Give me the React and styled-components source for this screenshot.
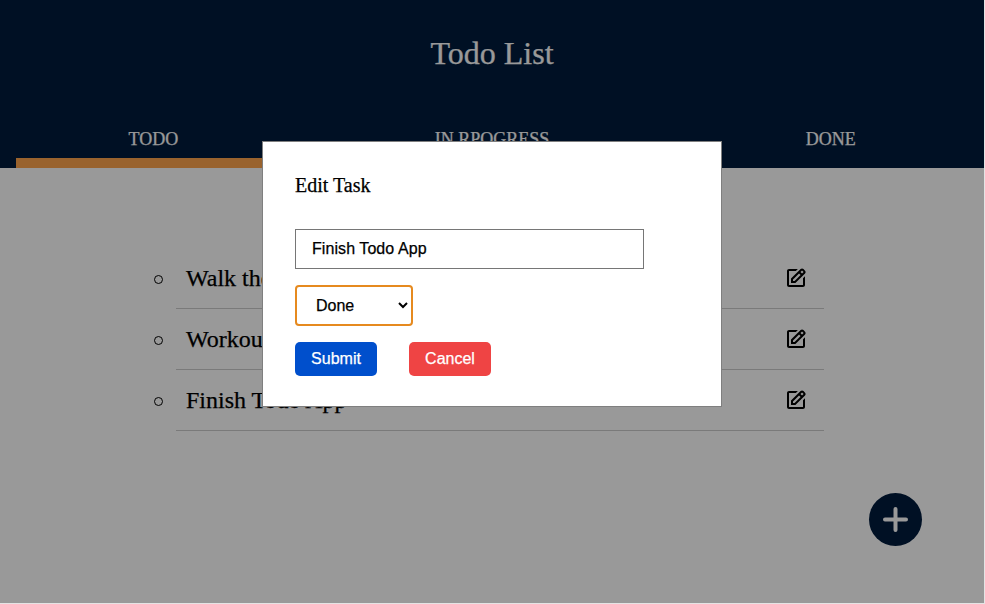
import React from "react";
import styled, { createGlobalStyle } from "styled-components";
import { BiEdit } from "react-icons/bi";

const GlobalStyle = createGlobalStyle`
  * { box-sizing: border-box; }
  html { background: #fff; }
  body { margin: 0; overflow: hidden; font-family: "Liberation Serif", "Times New Roman", serif; color: #000; -webkit-text-stroke: 0.25px currentColor; }
`;

const Page = styled.div`
  width: 985px;
  height: 604px;
  padding: 0 1px 1px 0;
  background: #e4e4e4;
`;

const Screen = styled.div`
  position: relative;
  width: 984px;
  height: 603px;
  background: #fff;
`;

const Header = styled.header`
  height: 168px;
  padding: 0 16px;
  display: flex;
  flex-direction: column;
  justify-content: space-between;
  background: #001b3d;
  color: #fff;
`;

const Title = styled.h1`
  margin: 35px 0 0;
  font-size: 32px;
  font-weight: 400;
  line-height: 37px;
  text-align: center;
`;

const Tabs = styled.nav`
  display: grid;
  grid-template-columns: repeat(3, 1fr);
  gap: 64px;
`;

const Tab = styled.div`
  height: 40px;
  border-bottom: 10px solid ${(p) => (p.$active ? "#ffa54d" : "transparent")};
  font-size: 18px;
  line-height: 22px;
  text-align: center;
`;

const TaskList = styled.ul`
  width: 648px;
  margin: 80px 0 0 176px;
  padding: 0;
  list-style: none;
`;

const TaskRow = styled.li`
  height: 61px;
  margin-left: -22px;
  display: flex;
  align-items: center;
`;

const Bullet = styled.span`
  width: 9px;
  height: 9px;
  margin: 2px 13px 0 0;
  border: 1px solid #000;
  border-radius: 50%;
`;

const TaskBody = styled.div`
  flex: 1;
  height: 61px;
  padding: 0 16px 0 10px;
  display: flex;
  align-items: center;
  justify-content: space-between;
  border-bottom: 1px solid #ccc;
  font-size: 24px;
`;

const AddButton = styled.button`
  position: absolute;
  left: 869px;
  top: 493px;
  width: 53px;
  height: 53px;
  padding: 0;
  border: 0;
  border-radius: 50%;
  display: grid;
  place-items: center;
  background: #001b3d;
`;

const Overlay = styled.div`
  position: absolute;
  inset: 0;
  background: rgba(0, 0, 0, 0.4);
`;

const Modal = styled.section`
  position: absolute;
  left: 262px;
  top: 141px;
  width: 460px;
  height: 266px;
  padding: 32px;
  border: 1px solid #7f7f7f;
  background: #fff;
`;

const ModalTitle = styled.h2`
  margin: 0 0 32px;
  font-size: 20px;
  font-weight: 400;
  line-height: 23px;
`;

const Form = styled.form`
  display: flex;
  flex-direction: column;
  align-items: flex-start;
  gap: 16px;
`;

const TextField = styled.input`
  width: 349px;
  height: 40px;
  padding: 0 16px;
  border: 1px solid #767676;
  border-radius: 0;
  outline: 0;
  background: #fff;
  color: #000;
  font: 16px "Liberation Sans", Arial, sans-serif;
  letter-spacing: 0.07px;
`;

const Select = styled.select`
  width: 118px;
  height: 41px;
  padding: 0 0 0 15px;
  border: 2px solid #e68a1f;
  border-radius: 4px;
  outline: 0;
  background: #fff;
  color: #000;
  font: 16px "Liberation Sans", Arial, sans-serif;
`;

const Actions = styled.div`
  display: flex;
  gap: 32px;
`;

const Button = styled.button`
  width: 82px;
  height: 34px;
  padding: 0;
  border: 0;
  border-radius: 5px;
  background: ${(p) => (p.$danger ? "#ef4444" : "#004fcc")};
  color: #fff;
  font: 16px "Liberation Sans", Arial, sans-serif;
`;

const tasks = ["Walk the dog", "Workout", "Finish Todo App"];

export default function App() {
  return (
    <Page>
      <GlobalStyle />
      <Screen>
        <Header>
          <Title>Todo List</Title>
          <Tabs>
            <Tab $active>TODO</Tab>
            <Tab>IN RPOGRESS</Tab>
            <Tab>DONE</Tab>
          </Tabs>
        </Header>
        <TaskList>
          {tasks.map((task) => (
            <TaskRow key={task}>
              <Bullet />
              <TaskBody>
                <span>{task}</span>
                <BiEdit size={24} />
              </TaskBody>
            </TaskRow>
          ))}
        </TaskList>
        <AddButton aria-label="Add task">
          <svg width="25" height="25" viewBox="0 0 25 25" stroke="#fff" strokeWidth="4" strokeLinecap="round">
            <path d="M2 12.5H23M12.5 2V23" />
          </svg>
        </AddButton>
        <Overlay />
        <Modal>
          <ModalTitle>Edit Task</ModalTitle>
          <Form>
            <TextField defaultValue="Finish Todo App" />
            <Select defaultValue="Done">
              <option>Todo</option>
              <option>In Progress</option>
              <option>Done</option>
            </Select>
            <Actions>
              <Button type="button">Submit</Button>
              <Button type="button" $danger>Cancel</Button>
            </Actions>
          </Form>
        </Modal>
      </Screen>
    </Page>
  );
}
